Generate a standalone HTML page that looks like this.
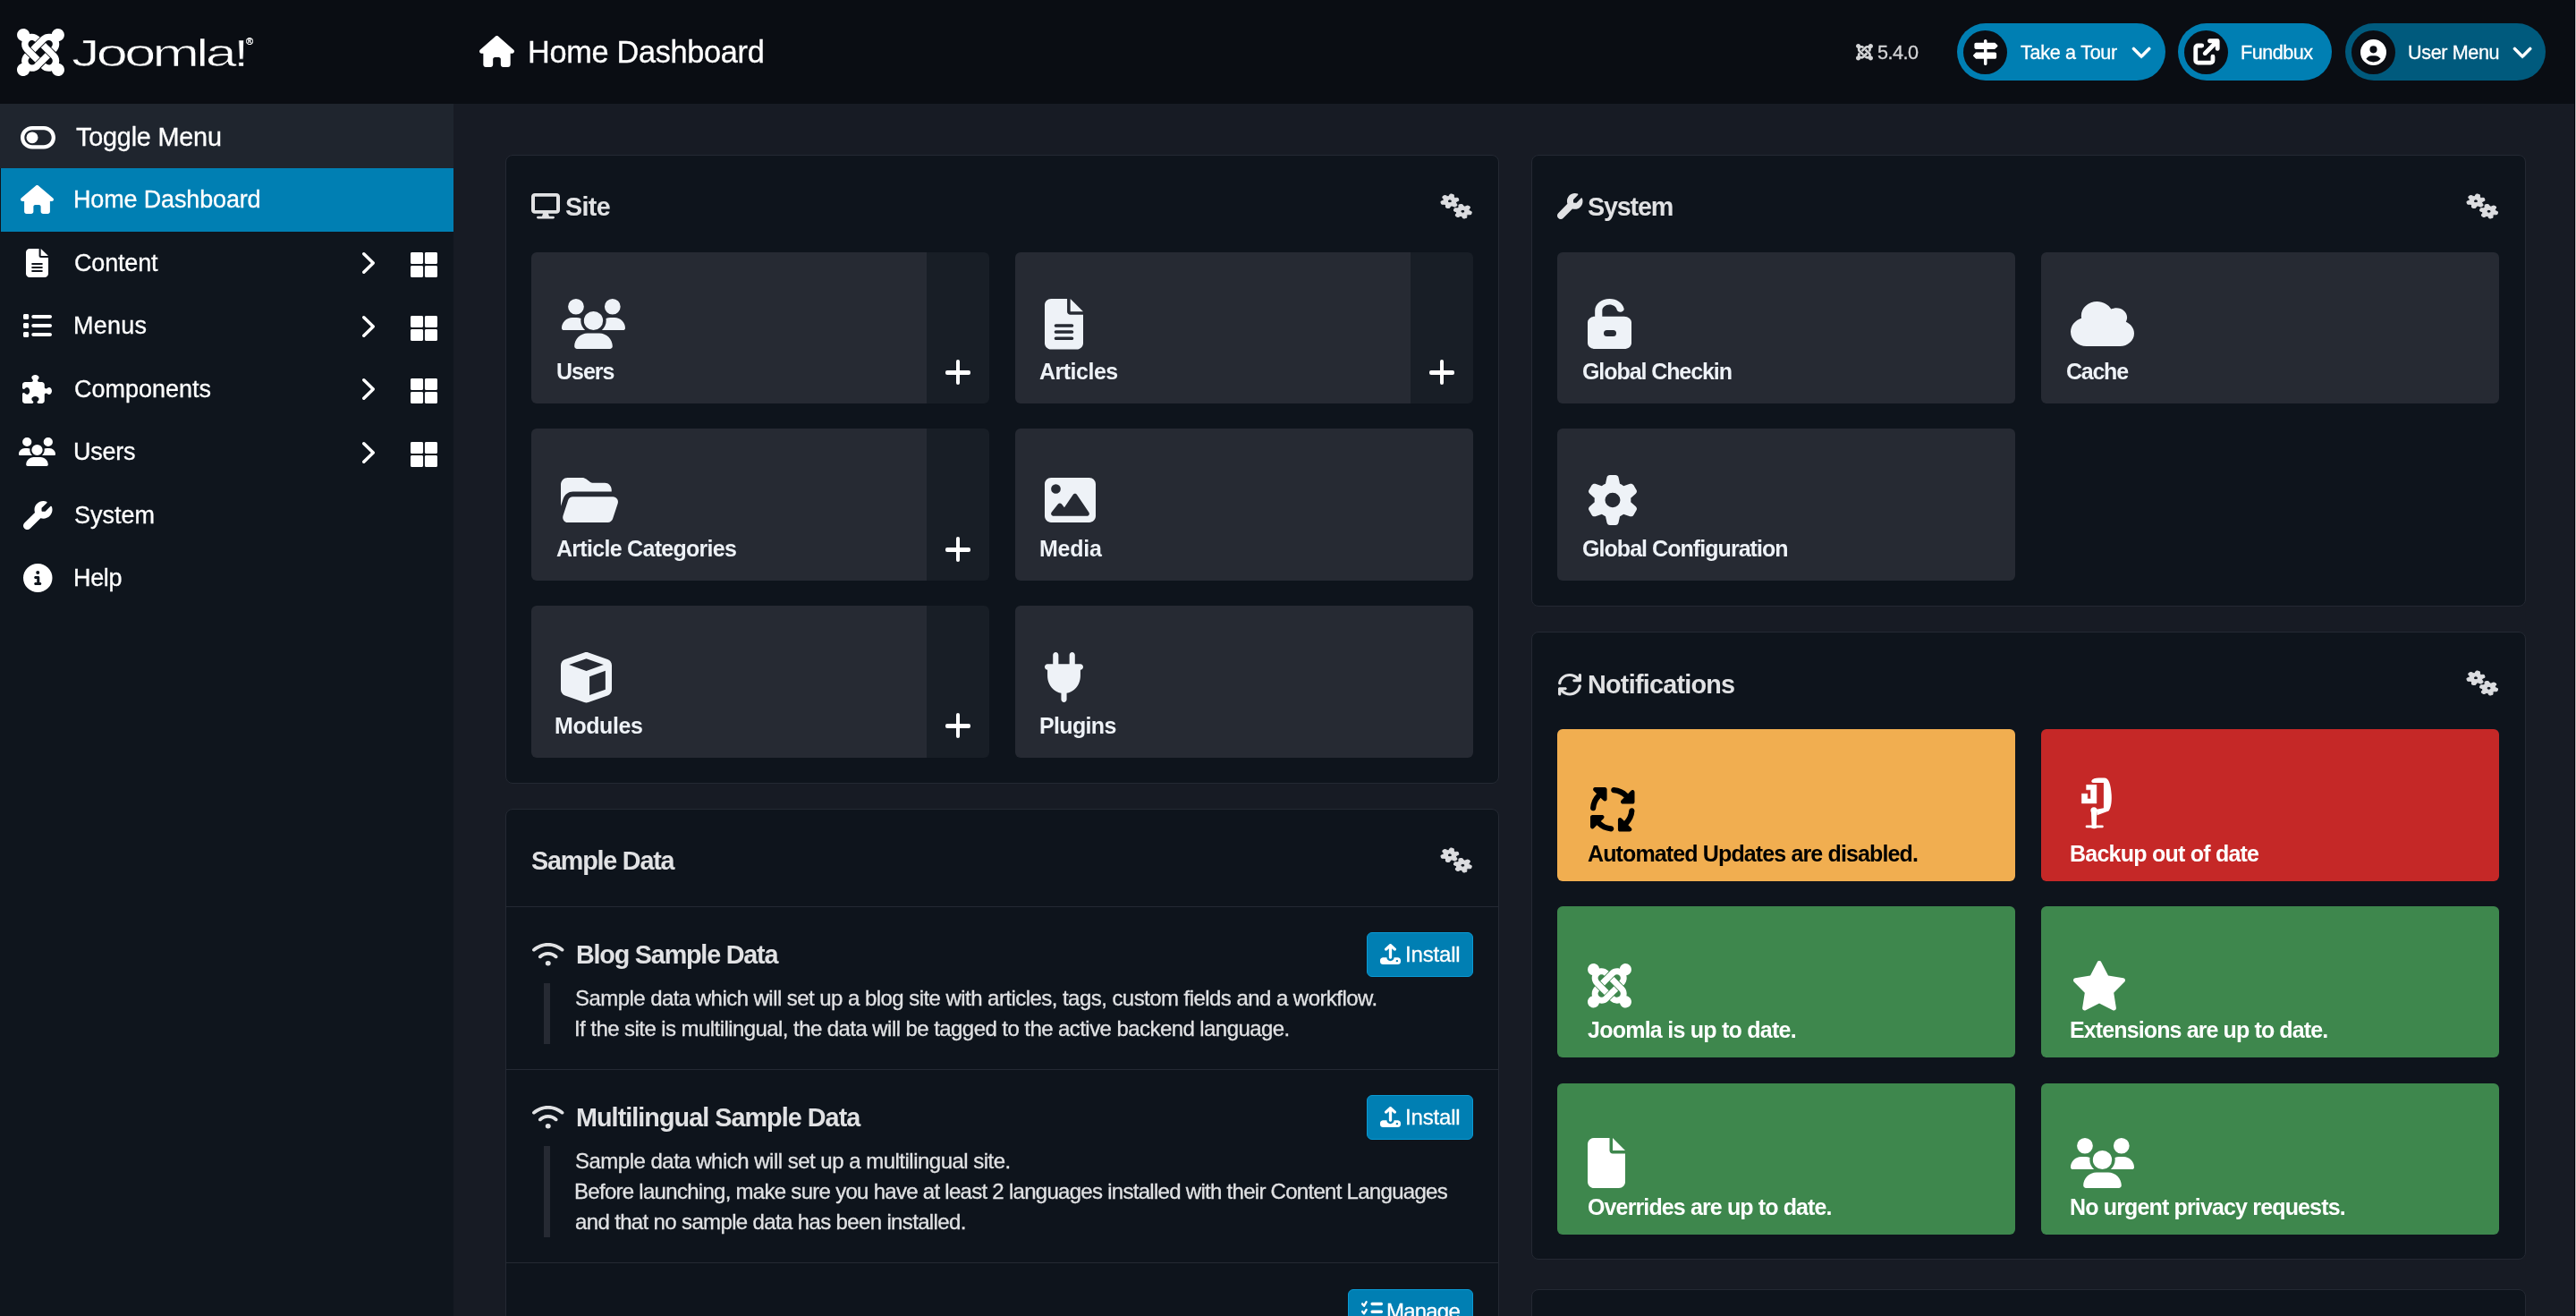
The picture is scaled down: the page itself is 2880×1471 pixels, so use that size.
<!DOCTYPE html>
<html lang="en"><head><meta charset="utf-8"><title>Home Dashboard - Administration</title>
<style>
html,body{margin:0;padding:0;overflow:hidden}
#app{position:relative;width:2880px;height:1471px;overflow:hidden;background:#171b24}
body{width:2880px;height:1471px;overflow:hidden;position:relative;background:#171b24;font-family:"Liberation Sans",Arial,sans-serif;color:#e1e2e4}
.t{position:absolute;white-space:nowrap;display:block;will-change:transform}
.i{position:absolute;display:block;overflow:visible}
h1,h2,h3,p,ul,li,nav,header,main,section,a,button{margin:0;padding:0;font:inherit;color:inherit;list-style:none;text-decoration:none;border:0;background:none}
</style></head><body>
<div id="app">
<header style="position:absolute;left:0px;top:0px;width:2880px;height:116px;background:#0a0d13;"><svg class="i" style="left:19.0px;top:32.0px;" width="53.0" height="53.0" viewBox="-0.0 31.9 448.0 448.1" fill="#fff" preserveAspectRatio="none"><path d="M.6 92.1C.6 58.8 27.4 32 60.4 32c30 0 54.5 21.9 59.2 50.2 32.6-7.6 67.1.6 96.5 30l-44.3 44.3c-20.5-20.5-42.6-16.3-55.4-3.5-14.3 14.3-14.3 37.9 0 52.2l99.5 99.5-44 44.3c-87.7-87.2-49.7-49.7-99.8-99.7-26.8-26.5-35-64.8-24.8-98.9C20.4 144.6.6 120.7.6 92.1m129.5 116.4 44.3 44.3c10-10 89.7-89.7 99.7-99.8 14.3-14.3 37.6-14.3 51.9 0 12.8 12.8 17 35-3.5 55.4l44 44.3c31.2-31.2 38.5-67.6 28.9-101.2 29.2-4.1 51.9-29.2 51.9-59.5 0-33.2-26.8-60.1-59.8-60.1-30.3 0-55.4 22.5-59.5 51.6-33.8-9.9-71.7-1.5-98.3 25.1-18.3 19.1-71.1 71.5-99.6 99.9m266.3 152.2c8.2-32.7-.9-68.5-26.3-93.9-11.8-12.2 5 4.7-99.5-99.7l-44.3 44.3 99.7 99.7c14.3 14.3 14.3 37.6 0 51.9-12.8 12.8-35 17-55.4-3.5l-44 44.3c27.6 30.2 68 38.8 102.7 28 5.5 27.4 29.7 48.1 58.9 48.1 33 0 59.8-26.8 59.8-60.1 0-30.2-22.5-55-51.6-59.1m-84.3-53.1-44-44.3c-87 86.4-50.4 50.4-99.7 99.8-14.3 14.3-37.6 14.3-51.9 0-13.1-13.4-16.9-35.3 3.2-55.4l-44-44.3c-30.2 30.2-38 65.2-29.5 98.3-26.7 6-46.2 29.9-46.2 58.2C0 453.2 26.8 480 59.8 480c28.6 0 52.5-19.8 58.6-46.7 32.7 8.2 68.5-.6 94.2-26 32.1-32 12.2-12.4 99.5-99.7"/></svg><span id="t1" class="t wm" style="left:80px;top:32px;font-size:42px;line-height:55px;color:#fff;transform:scaleX(1.5);transform-origin:0 0;letter-spacing:-2.45px;-webkit-text-stroke:0.65px #0a0d13;">Joomla!</span><span id="t2" class="t " style="left:275px;top:39px;font-size:11px;line-height:14px;-webkit-text-stroke:0.3px;color:#fff;">®</span><svg class="i" style="left:536.0px;top:39.5px;" width="39.0" height="35.0" viewBox="0.0 0.0 576.0 512.0" fill="#fff" preserveAspectRatio="none"><path d="M575.8 255.5c0 18-15 32.1-32 32.1h-32l.7 160.2c0 2.700-.2 5.400-.5 8.100V472c0 22.100-17.900 40-40 40H456c-1.100 0-2.200 0-3.300-.1c-1.400 .1-2.800 .1-4.200 .1H416 392c-22.100 0-40-17.900-40-40V448 384c0-17.700-14.300-32-32-32H256c-17.700 0-32 14.300-32 32v64 24c0 22.100-17.900 40-40 40H160 128.100c-1.500 0-3-.1-4.500-.2c-1.200 .1-2.400 .2-3.600 .2H104c-22.100 0-40-17.900-40-40V360c0-.9 0-1.900 .1-2.800V287.600H32c-18 0-32-14-32-32.100c0-9 3-17 10-24L266.400 8c7-7 15-8 22-8s15 2 21 7L564.800 231.500c8 7 12 15 11 24z"/></svg><h1><span id="t3" class="t " style="left:590px;top:35px;font-size:34.3px;line-height:46px;-webkit-text-stroke:0.3px;color:#fff;letter-spacing:-0.308px;">Home Dashboard</span></h1><svg class="i" style="left:2074.5px;top:49.0px;" width="19.0" height="18.5" viewBox="-0.0 31.9 448.0 448.1" fill="#d4d5d7" preserveAspectRatio="none"><path d="M.6 92.1C.6 58.8 27.4 32 60.4 32c30 0 54.5 21.9 59.2 50.2 32.6-7.6 67.1.6 96.5 30l-44.3 44.3c-20.5-20.5-42.6-16.3-55.4-3.5-14.3 14.3-14.3 37.9 0 52.2l99.5 99.5-44 44.3c-87.7-87.2-49.7-49.7-99.8-99.7-26.8-26.5-35-64.8-24.8-98.9C20.4 144.6.6 120.7.6 92.1m129.5 116.4 44.3 44.3c10-10 89.7-89.7 99.7-99.8 14.3-14.3 37.6-14.3 51.9 0 12.8 12.8 17 35-3.5 55.4l44 44.3c31.2-31.2 38.5-67.6 28.9-101.2 29.2-4.1 51.9-29.2 51.9-59.5 0-33.2-26.8-60.1-59.8-60.1-30.3 0-55.4 22.5-59.5 51.6-33.8-9.9-71.7-1.5-98.3 25.1-18.3 19.1-71.1 71.5-99.6 99.9m266.3 152.2c8.2-32.7-.9-68.5-26.3-93.9-11.8-12.2 5 4.7-99.5-99.7l-44.3 44.3 99.7 99.7c14.3 14.3 14.3 37.6 0 51.9-12.8 12.8-35 17-55.4-3.5l-44 44.3c27.6 30.2 68 38.8 102.7 28 5.5 27.4 29.7 48.1 58.9 48.1 33 0 59.8-26.8 59.8-60.1 0-30.2-22.5-55-51.6-59.1m-84.3-53.1-44-44.3c-87 86.4-50.4 50.4-99.7 99.8-14.3 14.3-37.6 14.3-51.9 0-13.1-13.4-16.9-35.3 3.2-55.4l-44-44.3c-30.2 30.2-38 65.2-29.5 98.3-26.7 6-46.2 29.9-46.2 58.2C0 453.2 26.8 480 59.8 480c28.6 0 52.5-19.8 58.6-46.7 32.7 8.2 68.5-.6 94.2-26 32.1-32 12.2-12.4 99.5-99.7"/></svg><span id="t4" class="t " style="left:2099px;top:44px;font-size:21.6px;line-height:29px;-webkit-text-stroke:0.3px;color:#d4d5d7;letter-spacing:-0.500px;">5.4.0</span><div style="position:absolute;left:2188px;top:26px;width:233px;height:64px;background:#007fb3;border-radius:32px;"></div><div style="position:absolute;left:2195px;top:34px;width:49px;height:49px;background:#0a0d13;border-radius:50%;"></div><svg class="i" style="left:2206.0px;top:44.0px;" width="27.5" height="29.0" viewBox="7.1 0.0 498.7 512.0" fill="#fff" preserveAspectRatio="none"><path d="M256.4 0c-17.7 0-32 14.3-32 32v32h-160c-17.7 0-32 14.3-32 32v64c0 17.7 14.3 32 32 32h160v64H71c-4.2 0-8.3 1.7-11.3 4.7l-48 48c-6.2 6.2-6.2 16.4 0 22.6l48 48c3 3 7.1 4.7 11.3 4.7h153.4v96c0 17.7 14.3 32 32 32s32-14.3 32-32v-96h160c17.7 0 32-14.3 32-32v-64c0-17.7-14.3-32-32-32h-160v-64h153.4c4.2 0 8.3-1.7 11.3-4.7l48-48c6.2-6.2 6.2-16.4 0-22.6l-48-48c-3-3-7.1-4.7-11.3-4.7H288.4V32c0-17.7-14.3-32-32-32"/></svg><span id="t5" class="t " style="left:2259px;top:44px;font-size:21.6px;line-height:29px;-webkit-text-stroke:0.3px;color:#fff;letter-spacing:-0.300px;">Take a Tour</span><svg class="i" style="left:2384.4px;top:53.4px;" width="20.199999999999818" height="11.79999999999999" viewBox="-0.1 159.9 448.2 256.1" fill="#fff" stroke="#fff" stroke-width="17.6" stroke-linejoin="round" preserveAspectRatio="none"><path d="M201.4 406.6c12.5 12.5 32.8 12.5 45.3 0l192-192c12.5-12.5 12.5-32.8 0-45.3s-32.8-12.5-45.3 0L224 338.7 54.6 169.4c-12.5-12.5-32.8-12.5-45.3 0s-12.5 32.8 0 45.3l192 192z"/></svg><div style="position:absolute;left:2435px;top:26px;width:172px;height:64px;background:#007fb3;border-radius:32px;"></div><div style="position:absolute;left:2442px;top:34px;width:49px;height:49px;background:#0a0d13;border-radius:50%;"></div><svg class="i" style="left:2452.65px;top:44.4px;" width="27.949999999999818" height="27.949999999999996" viewBox="0.0 0.0 512.0 512.0" fill="#fff" stroke="#fff" stroke-width="23.8" stroke-linejoin="round" preserveAspectRatio="none"><path d="M320 0c-17.7 0-32 14.3-32 32s14.3 32 32 32h82.7L201.3 265.4c-12.5 12.5-12.5 32.8 0 45.3s32.8 12.5 45.3 0L448 109.3V192c0 17.7 14.3 32 32 32s32-14.3 32-32V32c0-17.7-14.3-32-32-32zM80 96c-44.2 0-80 35.8-80 80v256c0 44.2 35.8 80 80 80h256c44.2 0 80-35.8 80-80v-80c0-17.7-14.3-32-32-32s-32 14.3-32 32v80c0 8.8-7.2 16-16 16H80c-8.8 0-16-7.2-16-16V176c0-8.8 7.2-16 16-16h80c17.7 0 32-14.3 32-32s-14.3-32-32-32z"/></svg><span id="t6" class="t " style="left:2505px;top:44px;font-size:21.6px;line-height:29px;-webkit-text-stroke:0.3px;color:#fff;letter-spacing:-0.500px;">Fundbux</span><div style="position:absolute;left:2622px;top:26px;width:224px;height:64px;background:#005a7d;border-radius:32px;"></div><div style="position:absolute;left:2629px;top:34px;width:49px;height:49px;background:#0a0d13;border-radius:50%;"></div><svg class="i" style="left:2639.0px;top:44.0px;" width="29.0" height="29.0" viewBox="0.0 0.0 512.0 512.0" fill="#fff" preserveAspectRatio="none"><path d="M399 384.2c-22.1-38.4-63.6-64.2-111-64.2h-64c-47.4 0-88.9 25.8-111 64.2 35.2 39.2 86.2 63.8 143 63.8s107.8-24.7 143-63.8M0 256a256 256 0 1 1 512 0 256 256 0 1 1-512 0m256 16a72 72 0 1 0 0-144 72 72 0 1 0 0 144"/></svg><span id="t7" class="t " style="left:2692px;top:44px;font-size:21.6px;line-height:29px;-webkit-text-stroke:0.3px;color:#fff;letter-spacing:-0.375px;">User Menu</span><svg class="i" style="left:2809.9px;top:53.4px;" width="20.199999999999818" height="11.79999999999999" viewBox="-0.1 159.9 448.2 256.1" fill="#fff" stroke="#fff" stroke-width="17.6" stroke-linejoin="round" preserveAspectRatio="none"><path d="M201.4 406.6c12.5 12.5 32.8 12.5 45.3 0l192-192c12.5-12.5 12.5-32.8 0-45.3s-32.8-12.5-45.3 0L224 338.7 54.6 169.4c-12.5-12.5-32.8-12.5-45.3 0s-12.5 32.8 0 45.3l192 192z"/></svg></header>
<nav style="position:absolute;left:0px;top:116px;width:507px;height:1355px;background:#0f151d;"><div style="position:absolute;left:0px;top:0px;width:507px;height:72px;background:#1f252e;"></div><div style="position:absolute;left:1px;top:72px;width:506px;height:71px;background:#007fb3;"></div><ul><li><svg class="i" style="left:23.0px;top:24.5px;" width="39.0" height="25.5" viewBox="0.0 64.0 576.0 384.0" fill="#fff" preserveAspectRatio="none"><path d="M384 128c70.700 0 128 57.300 128 128s-57.300 128-128 128H192c-70.700 0-128-57.300-128-128s57.300-128 128-128H384zM576 256c0-106-86-192-192-192H192C86 64 0 150 0 256S86 448 192 448H384c106 0 192-86 192-192zM192 352a96 96 0 1 0 0-192 96 96 0 1 0 0 192z"/></svg><span id="t8" class="t " style="left:85px;top:18px;font-size:28.8px;line-height:38px;-webkit-text-stroke:0.3px;color:#fff;letter-spacing:-0.200px;">Toggle Menu</span></li><li><svg class="i" style="left:23.0px;top:91.0px;" width="37.0" height="32.0" viewBox="0.0 0.0 576.0 512.0" fill="#fff" preserveAspectRatio="none"><path d="M575.8 255.5c0 18-15 32.1-32 32.1h-32l.7 160.2c0 2.700-.2 5.400-.5 8.100V472c0 22.100-17.900 40-40 40H456c-1.100 0-2.200 0-3.300-.1c-1.400 .1-2.800 .1-4.200 .1H416 392c-22.100 0-40-17.900-40-40V448 384c0-17.700-14.300-32-32-32H256c-17.700 0-32 14.300-32 32v64 24c0 22.100-17.900 40-40 40H160 128.100c-1.500 0-3-.1-4.500-.2c-1.200 .1-2.400 .2-3.600 .2H104c-22.100 0-40-17.900-40-40V360c0-.9 0-1.900 .1-2.800V287.600H32c-18 0-32-14-32-32.100c0-9 3-17 10-24L266.400 8c7-7 15-8 22-8s15 2 21 7L564.800 231.500c8 7 12 15 11 24z"/></svg><span id="t9" class="t " style="left:82px;top:89px;font-size:27.0px;line-height:36px;-webkit-text-stroke:0.3px;color:#fff;letter-spacing:-0.154px;">Home Dashboard</span></li><li><svg class="i" style="left:29.0px;top:162.0px;" width="25.0" height="32.0" viewBox="0.0 0.0 384.0 512.0" fill="#fff" preserveAspectRatio="none"><path d="M64 0C28.700 0 0 28.700 0 64V448c0 35.300 28.700 64 64 64H320c35.300 0 64-28.700 64-64V160H256c-17.700 0-32-14.300-32-32V0H64zM256 0V128H384L256 0zM112 256H272c8.800 0 16 7.200 16 16s-7.200 16-16 16H112c-8.800 0-16-7.200-16-16s7.200-16 16-16zm0 64H272c8.800 0 16 7.200 16 16s-7.200 16-16 16H112c-8.800 0-16-7.200-16-16s7.200-16 16-16zm0 64H272c8.800 0 16 7.200 16 16s-7.200 16-16 16H112c-8.800 0-16-7.200-16-16s7.200-16 16-16z"/></svg><span id="t10" class="t " style="left:83px;top:160px;font-size:27.0px;line-height:36px;-webkit-text-stroke:0.3px;color:#fff;letter-spacing:-0.167px;">Content</span><svg class="i" style="left:405.0px;top:166.0px;" width="14.0" height="24.0" viewBox="64.4 31.9 256.1 448.1" fill="#fff" preserveAspectRatio="none"><path d="M311.1 233.4c12.5 12.5 12.5 32.8 0 45.3l-192 192c-12.5 12.5-32.8 12.5-45.3 0s-12.5-32.8 0-45.3L243.2 256 73.9 86.6c-12.5-12.5-12.5-32.8 0-45.3s32.8-12.5 45.3 0l192 192z"/></svg><svg class="i" style="left:459.0px;top:166.0px;" width="30.0" height="28.0" viewBox="0.0 32.0 512.0 448.0" fill="#fff" preserveAspectRatio="none"><path d="M296 32h192c13.255 0 24 10.745 24 24v160c0 13.255-10.745 24-24 24H296c-13.255 0-24-10.745-24-24V56c0-13.255 10.745-24 24-24zm-80 0H24C10.745 32 0 42.745 0 56v160c0 13.255 10.745 24 24 24h192c13.255 0 24-10.745 24-24V56c0-13.255-10.745-24-24-24zM0 296v160c0 13.255 10.745 24 24 24h192c13.255 0 24-10.745 24-24V296c0-13.255-10.745-24-24-24H24c-13.255 0-24 10.745-24 24zm296 184h192c13.255 0 24-10.745 24-24V296c0-13.255-10.745-24-24-24H296c-13.255 0-24 10.745-24 24v160c0 13.255 10.745 24 24 24z"/></svg></li><li><svg class="i" style="left:26.0px;top:235.0px;" width="32.0" height="26.0" viewBox="16.0 48.0 496.0 416.0" fill="#fff" preserveAspectRatio="none"><path d="M40 48c-13.3 0-24 10.7-24 24v48c0 13.3 10.7 24 24 24h48c13.3 0 24-10.7 24-24V72c0-13.3-10.7-24-24-24zm152 16c-17.7 0-32 14.3-32 32s14.3 32 32 32h288c17.7 0 32-14.3 32-32s-14.3-32-32-32zm0 160c-17.7 0-32 14.3-32 32s14.3 32 32 32h288c17.7 0 32-14.3 32-32s-14.3-32-32-32zm0 160c-17.7 0-32 14.3-32 32s14.3 32 32 32h288c17.7 0 32-14.3 32-32s-14.3-32-32-32zM16 232v48c0 13.3 10.7 24 24 24h48c13.3 0 24-10.7 24-24v-48c0-13.3-10.7-24-24-24H40c-13.3 0-24 10.7-24 24m24 136c-13.3 0-24 10.7-24 24v48c0 13.3 10.7 24 24 24h48c13.3 0 24-10.7 24-24v-48c0-13.3-10.7-24-24-24z"/></svg><span id="t11" class="t " style="left:82px;top:230px;font-size:27.0px;line-height:36px;-webkit-text-stroke:0.3px;color:#fff;letter-spacing:0.250px;">Menus</span><svg class="i" style="left:405.0px;top:236.5px;" width="14.0" height="24.0" viewBox="64.4 31.9 256.1 448.1" fill="#fff" preserveAspectRatio="none"><path d="M311.1 233.4c12.5 12.5 12.5 32.8 0 45.3l-192 192c-12.5 12.5-32.8 12.5-45.3 0s-12.5-32.8 0-45.3L243.2 256 73.9 86.6c-12.5-12.5-12.5-32.8 0-45.3s32.8-12.5 45.3 0l192 192z"/></svg><svg class="i" style="left:459.0px;top:236.5px;" width="30.0" height="28.0" viewBox="0.0 32.0 512.0 448.0" fill="#fff" preserveAspectRatio="none"><path d="M296 32h192c13.255 0 24 10.745 24 24v160c0 13.255-10.745 24-24 24H296c-13.255 0-24-10.745-24-24V56c0-13.255 10.745-24 24-24zm-80 0H24C10.745 32 0 42.745 0 56v160c0 13.255 10.745 24 24 24h192c13.255 0 24-10.745 24-24V56c0-13.255-10.745-24-24-24zM0 296v160c0 13.255 10.745 24 24 24h192c13.255 0 24-10.745 24-24V296c0-13.255-10.745-24-24-24H24c-13.255 0-24 10.745-24 24zm296 184h192c13.255 0 24-10.745 24-24V296c0-13.255-10.745-24-24-24H296c-13.255 0-24 10.745-24 24v160c0 13.255 10.745 24 24 24z"/></svg></li><li><svg class="i" style="left:25.0px;top:303.0px;" width="33.0" height="32.0" viewBox="0.0 0.0 512.0 512.0" fill="#fff" preserveAspectRatio="none"><path d="M224 0c35.3 0 64 21.5 64 48 0 10.4-4.4 20-12 27.9-6.6 6.9-12 15.3-12 24.9 0 15 12.2 27.2 27.2 27.2H336c26.5 0 48 21.5 48 48v44.8c0 15 12.2 27.2 27.2 27.2 9.5 0 18-5.4 24.9-12 7.9-7.5 17.5-12 27.9-12 26.5 0 48 28.7 48 64s-21.5 64-48 64c-10.4 0-20.1-4.4-27.9-12-6.9-6.6-15.3-12-24.9-12-15 0-27.2 12.2-27.2 27.2V464c0 26.5-21.5 48-48 48h-56.8c-12.8 0-23.2-10.4-23.2-23.2 0-9.2 5.8-17.3 13.2-22.8 11.6-8.7 18.8-20.7 18.8-34 0-26.5-28.7-48-64-48s-64 21.5-64 48c0 13.3 7.2 25.3 18.8 34 7.4 5.5 13.2 13.5 13.2 22.8 0 12.8-10.4 23.2-23.2 23.2H48c-26.5 0-48-21.5-48-48V343.2C0 330.4 10.4 320 23.2 320c9.2 0 17.3 5.8 22.8 13.2 8.7 11.6 20.7 18.8 34 18.8 26.5 0 48-28.7 48-64s-21.5-64-48-64c-13.3 0-25.3 7.2-34 18.8-5.5 7.4-13.5 13.2-22.8 13.2C10.4 256 0 245.6 0 232.8V176c0-26.5 21.5-48 48-48h108.8c15 0 27.2-12.2 27.2-27.2 0-9.5-5.4-18-12-24.9-7.5-7.9-12-17.5-12-27.9 0-26.5 28.7-48 64-48"/></svg><span id="t12" class="t " style="left:83px;top:301px;font-size:27.0px;line-height:36px;-webkit-text-stroke:0.3px;color:#fff;letter-spacing:0.000px;">Components</span><svg class="i" style="left:405.0px;top:307.0px;" width="14.0" height="24.0" viewBox="64.4 31.9 256.1 448.1" fill="#fff" preserveAspectRatio="none"><path d="M311.1 233.4c12.5 12.5 12.5 32.8 0 45.3l-192 192c-12.5 12.5-32.8 12.5-45.3 0s-12.5-32.8 0-45.3L243.2 256 73.9 86.6c-12.5-12.5-12.5-32.8 0-45.3s32.8-12.5 45.3 0l192 192z"/></svg><svg class="i" style="left:459.0px;top:307.0px;" width="30.0" height="28.0" viewBox="0.0 32.0 512.0 448.0" fill="#fff" preserveAspectRatio="none"><path d="M296 32h192c13.255 0 24 10.745 24 24v160c0 13.255-10.745 24-24 24H296c-13.255 0-24-10.745-24-24V56c0-13.255 10.745-24 24-24zm-80 0H24C10.745 32 0 42.745 0 56v160c0 13.255 10.745 24 24 24h192c13.255 0 24-10.745 24-24V56c0-13.255-10.745-24-24-24zM0 296v160c0 13.255 10.745 24 24 24h192c13.255 0 24-10.745 24-24V296c0-13.255-10.745-24-24-24H24c-13.255 0-24 10.745-24 24zm296 184h192c13.255 0 24-10.745 24-24V296c0-13.255-10.745-24-24-24H296c-13.255 0-24 10.745-24 24v160c0 13.255 10.745 24 24 24z"/></svg></li><li><svg class="i" style="left:21.0px;top:373.0px;" width="41.0" height="32.0" viewBox="0.0 0.0 640.0 512.0" fill="#fff" preserveAspectRatio="none"><path d="M144 0a80 80 0 1 1 0 160A80 80 0 1 1 144 0zM512 0a80 80 0 1 1 0 160A80 80 0 1 1 512 0zM0 298.700C0 239.800 47.800 192 106.700 192h42.700c15.900 0 31 3.500 44.600 9.700c-1.300 7.200-1.900 14.700-1.900 22.300c0 38.200 16.800 72.500 43.300 96c-.2 0-.4 0-.7 0H21.300C9.600 320 0 310.400 0 298.700zM405.300 320c-.2 0-.4 0-.7 0c26.600-23.500 43.300-57.800 43.300-96c0-7.600-.7-15-1.900-22.300c13.600-6.300 28.700-9.700 44.600-9.700h42.700C592.200 192 640 239.800 640 298.700c0 11.800-9.600 21.300-21.300 21.300H405.300zM224 224a96 96 0 1 1 192 0 96 96 0 1 1 -192 0zM128 485.300C128 411.700 187.700 352 261.300 352H378.700C452.300 352 512 411.700 512 485.300c0 14.700-11.900 26.700-26.700 26.700H154.700c-14.700 0-26.700-11.900-26.700-26.700z"/></svg><span id="t13" class="t " style="left:82px;top:371px;font-size:27.0px;line-height:36px;-webkit-text-stroke:0.3px;color:#fff;letter-spacing:-0.250px;">Users</span><svg class="i" style="left:405.0px;top:377.5px;" width="14.0" height="24.0" viewBox="64.4 31.9 256.1 448.1" fill="#fff" preserveAspectRatio="none"><path d="M311.1 233.4c12.5 12.5 12.5 32.8 0 45.3l-192 192c-12.5 12.5-32.8 12.5-45.3 0s-12.5-32.8 0-45.3L243.2 256 73.9 86.6c-12.5-12.5-12.5-32.8 0-45.3s32.8-12.5 45.3 0l192 192z"/></svg><svg class="i" style="left:459.0px;top:377.5px;" width="30.0" height="28.0" viewBox="0.0 32.0 512.0 448.0" fill="#fff" preserveAspectRatio="none"><path d="M296 32h192c13.255 0 24 10.745 24 24v160c0 13.255-10.745 24-24 24H296c-13.255 0-24-10.745-24-24V56c0-13.255 10.745-24 24-24zm-80 0H24C10.745 32 0 42.745 0 56v160c0 13.255 10.745 24 24 24h192c13.255 0 24-10.745 24-24V56c0-13.255-10.745-24-24-24zM0 296v160c0 13.255 10.745 24 24 24h192c13.255 0 24-10.745 24-24V296c0-13.255-10.745-24-24-24H24c-13.255 0-24 10.745-24 24zm296 184h192c13.255 0 24-10.745 24-24V296c0-13.255-10.745-24-24-24H296c-13.255 0-24 10.745-24 24v160c0 13.255 10.745 24 24 24z"/></svg></li><li><svg class="i" style="left:25.5px;top:444.0px;" width="32.5" height="32.0" viewBox="24.0 0.0 520.0 520.0" fill="#fff" preserveAspectRatio="none"><path d="M509.4 98.6c7.6-7.6 20.3-5.7 24.1 4.3 6.8 17.7 10.5 37 10.5 57.1 0 88.4-71.6 160-160 160-17.5 0-34.4-2.8-50.2-8L146.9 498.9c-28.1 28.1-73.7 28.1-101.8 0s-28.1-73.7 0-101.8L232 210.2c-5.2-15.8-8-32.6-8-50.2C224 71.6 295.6 0 384 0c20.1 0 39.4 3.7 57.1 10.5 10 3.8 11.8 16.5 4.3 24.1l-88.7 88.7c-3 3-4.7 7.1-4.7 11.3V176c0 8.8 7.2 16 16 16h41.4c4.2 0 8.3-1.7 11.3-4.7z"/></svg><span id="t14" class="t " style="left:83px;top:442px;font-size:27.0px;line-height:36px;-webkit-text-stroke:0.3px;color:#fff;letter-spacing:0.000px;">System</span></li><li><svg class="i" style="left:25.5px;top:514.0px;" width="32.5" height="32.0" viewBox="0.0 0.0 512.0 512.0" fill="#fff" preserveAspectRatio="none"><path d="M256 512a256 256 0 1 0 0-512 256 256 0 1 0 0 512m-32-352a32 32 0 1 1 64 0 32 32 0 1 1-64 0m-8 64h48c13.3 0 24 10.7 24 24v88h8c13.3 0 24 10.7 24 24s-10.7 24-24 24h-80c-13.3 0-24-10.7-24-24s10.7-24 24-24h24v-64h-24c-13.3 0-24-10.7-24-24s10.7-24 24-24"/></svg><span id="t15" class="t " style="left:82px;top:512px;font-size:27.0px;line-height:36px;-webkit-text-stroke:0.3px;color:#fff;letter-spacing:-0.333px;">Help</span></li></ul></nav>
<section style="position:absolute;left:565px;top:173px;width:1109px;height:701px;background:#0e141c;border:1px solid #242933;border-radius:8px;"><svg class="i" style="left:28.0px;top:42.0px;" width="32.0" height="28.5" viewBox="0.0 32.0 512.0 480.0" fill="#e1e2e4" preserveAspectRatio="none"><path d="M448 96v256H64V96zM64 32C28.7 32 0 60.7 0 96v256c0 35.3 28.7 64 64 64h144l-16 48h-72c-13.3 0-24 10.7-24 24s10.7 24 24 24h272c13.3 0 24-10.7 24-24s-10.7-24-24-24h-72l-16-48h144c35.3 0 64-28.7 64-64V96c0-35.3-28.7-64-64-64z"/></svg><h2><span id="t16" class="t " style="left:66px;top:38px;font-size:28.75px;line-height:38px;font-weight:700;color:#e1e2e4;letter-spacing:-0.667px;">Site</span></h2><svg class="i" style="left:1045.25px;top:43.25px;" width="34.25" height="27.0" viewBox="18.0 -46.4 604.8 604.8" fill="#dcdde0" stroke="#dcdde0" stroke-width="19.7" stroke-linejoin="round" preserveAspectRatio="none"><path d="M415.9 210.5c12.2-3.3 25 2.5 30.5 13.8l18.6 37.6c10.3 1.4 20.4 4.2 29.9 8.1l35-23.3c10.5-7 24.4-5.6 33.3 3.3l19.2 19.2c8.9 8.9 10.3 22.9 3.3 33.3l-23.3 34.9c1.9 4.7 3.6 9.6 5 14.7s2.3 10.1 3 15.2l37.7 18.6c11.3 5.6 17.1 18.4 13.8 30.5l-7 26.2c-3.3 12.1-14.6 20.3-27.2 19.5l-42-2.7c-6.3 8.1-13.6 15.6-21.9 22l2.7 41.9c.8 12.6-7.4 24-19.5 27.2l-26.2 7c-12.2 3.3-24.9-2.5-30.5-13.8l-18.6-37.6c-10.3-1.4-20.4-4.2-29.9-8.1l-35 23.3c-10.5 7-24.4 5.6-33.3-3.3l-19.2-19.2c-8.9-8.9-10.3-22.8-3.3-33.3l23.3-35c-1.9-4.7-3.6-9.6-5-14.7s-2.3-10.2-3-15.2L288.6 382c-11.3-5.6-17-18.4-13.8-30.5l7-26.2c3.3-12.1 14.6-20.3 27.2-19.5l41.9 2.7c6.3-8.1 13.6-15.6 21.9-22l-2.7-41.8c-.8-12.6 7.4-24 19.5-27.2l26.2-7zM448.4 340a44 44 0 1 0 .1 88 44 44 0 1 0-.1-88M224.9-45.5l26.2 7c12.1 3.3 20.3 14.7 19.5 27.2l-2.7 41.8c8.3 6.4 15.6 13.8 21.9 22l42-2.7c12.5-.8 23.9 7.4 27.2 19.5l7 26.2c3.2 12.1-2.5 24.9-13.8 30.5l-37.7 18.6c-.7 5.1-1.7 10.2-3 15.2s-3.1 10-5 14.7l23.3 35c7 10.5 5.6 24.4-3.3 33.3L307.3 262c-8.9 8.9-22.8 10.3-33.3 3.3L239 242c-9.5 3.9-19.6 6.7-29.9 8.1l-18.6 37.6c-5.6 11.3-18.4 17-30.5 13.8l-26.2-7c-12.2-3.3-20.3-14.7-19.5-27.2l2.7-41.9c-8.3-6.4-15.6-13.8-21.9-22l-42 2.7c-12.5.8-23.9-7.4-27.2-19.5l-7-26.2c-3.2-12.1 2.5-24.9 13.8-30.5l37.7-18.6c.7-5.1 1.7-10.1 3-15.2 1.4-5.1 3-10 5-14.7L55.1 46.5c-7-10.5-5.6-24.4 3.3-33.3L77.6-6c8.9-8.9 22.8-10.3 33.3-3.3l35 23.3c9.5-3.9 19.6-6.7 29.9-8.1l18.6-37.6c5.6-11.3 18.3-17 30.5-13.8M192.4 84a44 44 0 1 0 0 88 44 44 0 1 0 0-88"/></svg><div style="position:absolute;left:28px;top:108px;width:442px;height:169px;background:#262a33;border-radius:6px 0 0 6px;"></div><div style="position:absolute;left:470px;top:108px;width:70px;height:169px;background:#181e26;border-radius:0 6px 6px 0;"></div><div style="position:absolute;left:491px;top:240.0px;width:28px;height:4.5px;background:#fff;border-radius:2px;"></div><div style="position:absolute;left:502.75px;top:228.25px;width:4.5px;height:28px;background:#fff;border-radius:2px;"></div><svg class="i" style="left:61.5px;top:160.0px;" width="71.0" height="56.0" viewBox="0.0 0.0 640.0 512.0" fill="#eef2f7" preserveAspectRatio="none"><path d="M144 0a80 80 0 1 1 0 160A80 80 0 1 1 144 0zM512 0a80 80 0 1 1 0 160A80 80 0 1 1 512 0zM0 298.700C0 239.800 47.800 192 106.700 192h42.700c15.900 0 31 3.500 44.600 9.700c-1.300 7.200-1.900 14.700-1.900 22.300c0 38.200 16.800 72.500 43.300 96c-.2 0-.4 0-.7 0H21.300C9.600 320 0 310.400 0 298.700zM405.300 320c-.2 0-.4 0-.7 0c26.600-23.500 43.300-57.800 43.300-96c0-7.600-.7-15-1.900-22.300c13.600-6.300 28.700-9.700 44.600-9.700h42.700C592.200 192 640 239.800 640 298.700c0 11.800-9.600 21.300-21.300 21.300H405.300zM224 224a96 96 0 1 1 192 0 96 96 0 1 1 -192 0zM128 485.300C128 411.700 187.700 352 261.300 352H378.700C452.300 352 512 411.700 512 485.300c0 14.700-11.900 26.700-26.700 26.700H154.700c-14.700 0-26.700-11.900-26.700-26.700z"/></svg><span id="t17" class="t " style="left:56px;top:225px;font-size:25px;line-height:32px;font-weight:700;color:#eef2f7;letter-spacing:-1.000px;">Users</span><div style="position:absolute;left:569px;top:108px;width:442px;height:169px;background:#262a33;border-radius:6px 0 0 6px;"></div><div style="position:absolute;left:1011px;top:108px;width:70px;height:169px;background:#181e26;border-radius:0 6px 6px 0;"></div><div style="position:absolute;left:1032px;top:240.0px;width:28px;height:4.5px;background:#fff;border-radius:2px;"></div><div style="position:absolute;left:1043.75px;top:228.25px;width:4.5px;height:28px;background:#fff;border-radius:2px;"></div><svg class="i" style="left:602.0px;top:159.5px;" width="43.0" height="56.5" viewBox="0.0 0.0 384.0 512.0" fill="#eef2f7" preserveAspectRatio="none"><path d="M64 0C28.700 0 0 28.700 0 64V448c0 35.300 28.700 64 64 64H320c35.300 0 64-28.700 64-64V160H256c-17.700 0-32-14.300-32-32V0H64zM256 0V128H384L256 0zM112 256H272c8.800 0 16 7.200 16 16s-7.200 16-16 16H112c-8.800 0-16-7.200-16-16s7.200-16 16-16zm0 64H272c8.800 0 16 7.200 16 16s-7.200 16-16 16H112c-8.800 0-16-7.200-16-16s7.200-16 16-16zm0 64H272c8.800 0 16 7.200 16 16s-7.200 16-16 16H112c-8.800 0-16-7.200-16-16s7.200-16 16-16z"/></svg><span id="t18" class="t " style="left:596px;top:225px;font-size:25px;line-height:32px;font-weight:700;color:#eef2f7;letter-spacing:-0.500px;">Articles</span><div style="position:absolute;left:28px;top:305.4px;width:442px;height:169.6px;background:#262a33;border-radius:6px 0 0 6px;"></div><div style="position:absolute;left:470px;top:305.4px;width:70px;height:169.6px;background:#181e26;border-radius:0 6px 6px 0;"></div><div style="position:absolute;left:491px;top:438.0px;width:28px;height:4.5px;background:#fff;border-radius:2px;"></div><div style="position:absolute;left:502.75px;top:426.25px;width:4.5px;height:28px;background:#fff;border-radius:2px;"></div><svg class="i" style="left:61.0px;top:360.0px;" width="64.0" height="50.0" viewBox="32.4 32.0 541.4 416.0" fill="#eef2f7" preserveAspectRatio="none"><path d="m56 225.6-23.6 70.6V96c0-35.3 28.7-64 64-64h138.7c13.8 0 27.3 4.5 38.4 12.8l38.4 28.8c5.5 4.2 12.3 6.4 19.2 6.4h117.3c35.3 0 64 28.7 64 64v16H147c-41.3 0-78 26.4-91.1 65.6zM477.8 448H99c-32.8 0-55.9-32.1-45.5-63.2l48-144C108 221.2 126.4 208 147 208h378.8c32.8 0 55.9 32.1 45.5 63.2l-48 144c-6.5 19.6-24.9 32.8-45.5 32.8"/></svg><span id="t19" class="t " style="left:56px;top:423px;font-size:25px;line-height:32px;font-weight:700;color:#eef2f7;letter-spacing:-0.706px;">Article Categories</span><div style="position:absolute;left:569px;top:305.4px;width:512px;height:169.6px;background:#262a33;border-radius:6px;"></div><svg class="i" style="left:602.0px;top:360.0px;" width="57.0" height="50.0" viewBox="0.0 32.0 512.0 448.0" fill="#eef2f7" preserveAspectRatio="none"><path d="M0 96C0 60.700 28.700 32 64 32H448c35.300 0 64 28.700 64 64V416c0 35.300-28.700 64-64 64H64c-35.300 0-64-28.700-64-64V96zM323.800 202.500c-4.500-6.600-11.900-10.500-19.800-10.500s-15.400 3.900-19.800 10.500l-87 127.600L170.700 297c-4.600-5.700-11.500-9-18.700-9s-14.200 3.300-18.700 9l-64 80c-5.800 7.200-6.900 17.100-2.900 25.400s12.400 13.600 21.600 13.600h96 32H424c8.900 0 17.100-4.900 21.200-12.800s3.600-17.400-1.400-24.700l-120-176zM112 192a48 48 0 1 0 0-96 48 48 0 1 0 0 96z"/></svg><span id="t20" class="t " style="left:596px;top:423px;font-size:25px;line-height:32px;font-weight:700;color:#eef2f7;letter-spacing:-0.250px;">Media</span><div style="position:absolute;left:28px;top:502.79999999999995px;width:442px;height:169.8px;background:#262a33;border-radius:6px 0 0 6px;"></div><div style="position:absolute;left:470px;top:502.79999999999995px;width:70px;height:169.8px;background:#181e26;border-radius:0 6px 6px 0;"></div><div style="position:absolute;left:491px;top:635.0px;width:28px;height:4.5px;background:#fff;border-radius:2px;"></div><div style="position:absolute;left:502.75px;top:623.25px;width:4.5px;height:28px;background:#fff;border-radius:2px;"></div><svg class="i" style="left:61.0px;top:554.5px;" width="57.0" height="56.5" viewBox="0.0 1.9 512.0 508.1" fill="#eef2f7" preserveAspectRatio="none"><path d="M234.500 5.700c13.900-5 29.100-5 43.100 0l192 68.600C495 83.400 512 107.500 512 134.600V377.400c0 27-17 51.200-42.500 60.300l-192 68.600c-13.900 5-29.100 5-43.100 0l-192-68.600C17 428.600 0 404.500 0 377.400V134.600c0-27 17-51.200 42.500-60.300l192-68.600zM256 66L82.300 128 256 190l173.700-62L256 66zm32 368.600l160-57.100v-188L288 246.600v188z"/></svg><span id="t21" class="t " style="left:54px;top:621px;font-size:25px;line-height:32px;font-weight:700;color:#eef2f7;letter-spacing:-0.417px;">Modules</span><div style="position:absolute;left:569px;top:502.79999999999995px;width:512px;height:169.8px;background:#262a33;border-radius:6px;"></div><svg class="i" style="left:602.0px;top:555.0px;" width="43.0" height="56.0" viewBox="0.0 -32.0 448.0 544.0" fill="#eef2f7" preserveAspectRatio="none"><path d="M128-32c17.7 0 32 14.3 32 32v96h128V0c0-17.7 14.3-32 32-32s32 14.3 32 32v96h64c17.7 0 32 14.3 32 32s-14.3 32-32 32v64c0 95.1-69.2 174.1-160 189.3V480c0 17.7-14.3 32-32 32s-32-14.3-32-32v-66.7C101.2 398.1 32 319.1 32 224v-64c-17.7 0-32-14.3-32-32s14.3-32 32-32h64V0c0-17.7 14.3-32 32-32"/></svg><span id="t22" class="t " style="left:596px;top:621px;font-size:25px;line-height:32px;font-weight:700;color:#eef2f7;letter-spacing:-0.667px;">Plugins</span></section>
<section style="position:absolute;left:1712px;top:173px;width:1110px;height:503px;background:#0e141c;border:1px solid #242933;border-radius:8px;"><svg class="i" style="left:28.0px;top:42.0px;" width="28.5" height="29.0" viewBox="24.0 0.0 520.0 520.0" fill="#e1e2e4" preserveAspectRatio="none"><path d="M509.4 98.6c7.6-7.6 20.3-5.7 24.1 4.3 6.8 17.7 10.5 37 10.5 57.1 0 88.4-71.6 160-160 160-17.5 0-34.4-2.8-50.2-8L146.9 498.9c-28.1 28.1-73.7 28.1-101.8 0s-28.1-73.7 0-101.8L232 210.2c-5.2-15.8-8-32.6-8-50.2C224 71.6 295.6 0 384 0c20.1 0 39.4 3.7 57.1 10.5 10 3.8 11.8 16.5 4.3 24.1l-88.7 88.7c-3 3-4.7 7.1-4.7 11.3V176c0 8.8 7.2 16 16 16h41.4c4.2 0 8.3-1.7 11.3-4.7z"/></svg><h2><span id="t23" class="t " style="left:62px;top:38px;font-size:28.75px;line-height:38px;font-weight:700;color:#e1e2e4;letter-spacing:-1.200px;">System</span></h2><svg class="i" style="left:1045.0px;top:43.25px;" width="34.5" height="27.0" viewBox="18.0 -46.4 604.8 604.8" fill="#dcdde0" stroke="#dcdde0" stroke-width="19.7" stroke-linejoin="round" preserveAspectRatio="none"><path d="M415.9 210.5c12.2-3.3 25 2.5 30.5 13.8l18.6 37.6c10.3 1.4 20.4 4.2 29.9 8.1l35-23.3c10.5-7 24.4-5.6 33.3 3.3l19.2 19.2c8.9 8.9 10.3 22.9 3.3 33.3l-23.3 34.9c1.9 4.7 3.6 9.6 5 14.7s2.3 10.1 3 15.2l37.7 18.6c11.3 5.6 17.1 18.4 13.8 30.5l-7 26.2c-3.3 12.1-14.6 20.3-27.2 19.5l-42-2.7c-6.3 8.1-13.6 15.6-21.9 22l2.7 41.9c.8 12.6-7.4 24-19.5 27.2l-26.2 7c-12.2 3.3-24.9-2.5-30.5-13.8l-18.6-37.6c-10.3-1.4-20.4-4.2-29.9-8.1l-35 23.3c-10.5 7-24.4 5.6-33.3-3.3l-19.2-19.2c-8.9-8.9-10.3-22.8-3.3-33.3l23.3-35c-1.9-4.7-3.6-9.6-5-14.7s-2.3-10.2-3-15.2L288.6 382c-11.3-5.6-17-18.4-13.8-30.5l7-26.2c3.3-12.1 14.6-20.3 27.2-19.5l41.9 2.7c6.3-8.1 13.6-15.6 21.9-22l-2.7-41.8c-.8-12.6 7.4-24 19.5-27.2l26.2-7zM448.4 340a44 44 0 1 0 .1 88 44 44 0 1 0-.1-88M224.9-45.5l26.2 7c12.1 3.3 20.3 14.7 19.5 27.2l-2.7 41.8c8.3 6.4 15.6 13.8 21.9 22l42-2.7c12.5-.8 23.9 7.4 27.2 19.5l7 26.2c3.2 12.1-2.5 24.9-13.8 30.5l-37.7 18.6c-.7 5.1-1.7 10.2-3 15.2s-3.1 10-5 14.7l23.3 35c7 10.5 5.6 24.4-3.3 33.3L307.3 262c-8.9 8.9-22.8 10.3-33.3 3.3L239 242c-9.5 3.9-19.6 6.7-29.9 8.1l-18.6 37.6c-5.6 11.3-18.4 17-30.5 13.8l-26.2-7c-12.2-3.3-20.3-14.7-19.5-27.2l2.7-41.9c-8.3-6.4-15.6-13.8-21.9-22l-42 2.7c-12.5.8-23.9-7.4-27.2-19.5l-7-26.2c-3.2-12.1 2.5-24.9 13.8-30.5l37.7-18.6c.7-5.1 1.7-10.1 3-15.2 1.4-5.1 3-10 5-14.7L55.1 46.5c-7-10.5-5.6-24.4 3.3-33.3L77.6-6c8.9-8.9 22.8-10.3 33.3-3.3l35 23.3c9.5-3.9 19.6-6.7 29.9-8.1l18.6-37.6c5.6-11.3 18.3-17 30.5-13.8M192.4 84a44 44 0 1 0 0 88 44 44 0 1 0 0-88"/></svg><div style="position:absolute;left:28px;top:108px;width:512px;height:169px;background:#262a33;border-radius:6px;"></div><svg class="i" style="left:62.0px;top:160.0px;" width="49.0" height="56.0" viewBox="0.0 -32.0 384.0 544.0" fill="#eef2f7" preserveAspectRatio="none"><path d="M128 96c0-35.3 28.7-64 64-64 31.7 0 58 23 63.1 53.3 2.9 17.4 19.4 29.2 36.9 26.3s29.2-19.4 26.3-36.9C308.1 14.1 255.5-32 192-32 121.3-32 64 25.3 64 96v64c-35.3 0-64 28.7-64 64v224c0 35.3 28.7 64 64 64h256c35.3 0 64-28.7 64-64V224c0-35.3-28.7-64-64-64H128z"/></svg><span id="t24" class="t " style="left:56px;top:225px;font-size:25px;line-height:32px;font-weight:700;color:#eef2f7;letter-spacing:-1.077px;">Global Checkin</span><div style="position:absolute;left:79.5px;top:195px;width:14px;height:7px;background:#262a33;border-radius:3.5px;"></div><div style="position:absolute;left:569px;top:108px;width:512px;height:169px;background:#262a33;border-radius:6px;"></div><svg class="i" style="left:602.0px;top:163.0px;" width="71.0" height="50.0" viewBox="0.0 32.0 576.0 448.0" fill="#eef2f7" preserveAspectRatio="none"><path d="M0 336c0 79.5 64.5 144 144 144h304c70.7 0 128-57.3 128-128 0-51.6-30.5-96.1-74.5-116.3 6.7-13.1 10.5-28 10.5-43.7 0-53-43-96-96-96-17.7 0-34.2 4.8-48.4 13.1C343.5 63.3 295.4 32 240 32 160.5 32 96 96.5 96 176c0 8 .7 15.9 1.9 23.5C41 218.7 0 272.6 0 336"/></svg><span id="t25" class="t " style="left:597px;top:225px;font-size:25px;line-height:32px;font-weight:700;color:#eef2f7;letter-spacing:-1.250px;">Cache</span><div style="position:absolute;left:28px;top:305.4px;width:512px;height:169.6px;background:#262a33;border-radius:6px;"></div><svg class="i" style="left:63.0px;top:357.0px;" width="54.0" height="56.0" viewBox="1.5 -16.0 509.6 544.0" fill="#eef2f7" preserveAspectRatio="none"><path d="M195.1 9.5c3-14.8 16.1-25.5 31.3-25.5h59.8c15.2 0 28.3 10.7 31.3 25.5l14.5 70c14.1 6 27.3 13.7 39.3 22.8l67.8-22.5c14.4-4.8 30.2 1.2 37.8 14.4l29.9 51.8c7.6 13.2 4.9 29.8-6.5 39.9L447 233.3c.9 7.4 1.3 15 1.3 22.7s-.5 15.3-1.3 22.7l53.4 47.5c11.4 10.1 14 26.8 6.5 39.9L477 417.9c-7.6 13.1-23.4 19.2-37.8 14.4l-67.8-22.5c-12.1 9.1-25.3 16.7-39.3 22.8l-14.4 69.9c-3.1 14.9-16.2 25.5-31.3 25.5h-59.8c-15.2 0-28.3-10.7-31.3-25.5l-14.4-69.9c-14.1-6-27.2-13.7-39.3-22.8l-68.1 22.5c-14.4 4.8-30.2-1.2-37.8-14.4L5.8 366.1c-7.6-13.2-4.9-29.8 6.5-39.9l53.4-47.5c-.9-7.4-1.3-15-1.3-22.7s.5-15.3 1.3-22.7l-53.4-47.5C.9 175.7-1.7 159 5.8 145.9l29.9-51.8c7.6-13.2 23.4-19.2 37.8-14.4l67.8 22.5c12.1-9.1 25.3-16.7 39.3-22.8zM256.3 336a80 80 0 1 0-.6-160 80 80 0 1 0 .6 160"/></svg><span id="t26" class="t " style="left:56px;top:423px;font-size:25px;line-height:32px;font-weight:700;color:#eef2f7;letter-spacing:-0.947px;">Global Configuration</span></section>
<section style="position:absolute;left:1712px;top:706px;width:1110px;height:700px;background:#0e141c;border:1px solid #242933;border-radius:8px;"><svg class="i" style="left:29.0px;top:45.5px;" width="26.0" height="24.5" viewBox="-0.0 0.0 512.1 512.0" fill="#e1e2e4" preserveAspectRatio="none"><path d="M65.9 228.5C79.2 135.5 159.3 64 256 64c53 0 101 21.5 135.8 56.2l.6.6 7.6 7.2h-47.9c-17.7 0-32 14.3-32 32s14.3 32 32 32h128c17.7 0 32-14.3 32-32V32c0-17.7-14.3-32-32-32s-32 14.3-32 32v53.4l-11.3-10.7C390.5 28.6 326.5 0 256 0 127 0 20.3 95.4 2.6 219.5c-2.5 17.5 9.6 33.7 27.1 36.2s33.7-9.7 36.2-27.1zm443.5 64c2.5-17.5-9.7-33.7-27.1-36.2s-33.7 9.7-36.2 27.1c-13.3 93-93.4 164.5-190.1 164.5-53 0-101-21.5-135.8-56.2l-.6-.6-7.6-7.2h47.9c17.7 0 32-14.3 32-32s-14.3-32-32-32L32 320c-8.5 0-16.7 3.4-22.7 9.5S-.1 343.7 0 352.3l1 127c.1 17.7 14.6 31.9 32.3 31.7s31.9-14.6 31.7-32.3l-.4-51.5 10.7 10.1C121.6 483.4 185.5 512 256 512c129 0 235.7-95.4 253.4-219.5"/></svg><h2><span id="t27" class="t " style="left:62px;top:39px;font-size:28.75px;line-height:38px;font-weight:700;color:#e1e2e4;letter-spacing:-0.750px;">Notifications</span></h2><svg class="i" style="left:1045.0px;top:43.25px;" width="34.5" height="27.0" viewBox="18.0 -46.4 604.8 604.8" fill="#dcdde0" stroke="#dcdde0" stroke-width="19.7" stroke-linejoin="round" preserveAspectRatio="none"><path d="M415.9 210.5c12.2-3.3 25 2.5 30.5 13.8l18.6 37.6c10.3 1.4 20.4 4.2 29.9 8.1l35-23.3c10.5-7 24.4-5.6 33.3 3.3l19.2 19.2c8.9 8.9 10.3 22.9 3.3 33.3l-23.3 34.9c1.9 4.7 3.6 9.6 5 14.7s2.3 10.1 3 15.2l37.7 18.6c11.3 5.6 17.1 18.4 13.8 30.5l-7 26.2c-3.3 12.1-14.6 20.3-27.2 19.5l-42-2.7c-6.3 8.1-13.6 15.6-21.9 22l2.7 41.9c.8 12.6-7.4 24-19.5 27.2l-26.2 7c-12.2 3.3-24.9-2.5-30.5-13.8l-18.6-37.6c-10.3-1.4-20.4-4.2-29.9-8.1l-35 23.3c-10.5 7-24.4 5.6-33.3-3.3l-19.2-19.2c-8.9-8.9-10.3-22.8-3.3-33.3l23.3-35c-1.9-4.7-3.6-9.6-5-14.7s-2.3-10.2-3-15.2L288.6 382c-11.3-5.6-17-18.4-13.8-30.5l7-26.2c3.3-12.1 14.6-20.3 27.2-19.5l41.9 2.7c6.3-8.1 13.6-15.6 21.9-22l-2.7-41.8c-.8-12.6 7.4-24 19.5-27.2l26.2-7zM448.4 340a44 44 0 1 0 .1 88 44 44 0 1 0-.1-88M224.9-45.5l26.2 7c12.1 3.3 20.3 14.7 19.5 27.2l-2.7 41.8c8.3 6.4 15.6 13.8 21.9 22l42-2.7c12.5-.8 23.9 7.4 27.2 19.5l7 26.2c3.2 12.1-2.5 24.9-13.8 30.5l-37.7 18.6c-.7 5.1-1.7 10.2-3 15.2s-3.1 10-5 14.7l23.3 35c7 10.5 5.6 24.4-3.3 33.3L307.3 262c-8.9 8.9-22.8 10.3-33.3 3.3L239 242c-9.5 3.9-19.6 6.7-29.9 8.1l-18.6 37.6c-5.6 11.3-18.4 17-30.5 13.8l-26.2-7c-12.2-3.3-20.3-14.7-19.5-27.2l2.7-41.9c-8.3-6.4-15.6-13.8-21.9-22l-42 2.7c-12.5.8-23.9-7.4-27.2-19.5l-7-26.2c-3.2-12.1 2.5-24.9 13.8-30.5l37.7-18.6c.7-5.1 1.7-10.1 3-15.2 1.4-5.1 3-10 5-14.7L55.1 46.5c-7-10.5-5.6-24.4 3.3-33.3L77.6-6c8.9-8.9 22.8-10.3 33.3-3.3l35 23.3c9.5-3.9 19.6-6.7 29.9-8.1l18.6-37.6c5.6-11.3 18.3-17 30.5-13.8M192.4 84a44 44 0 1 0 0 88 44 44 0 1 0 0-88"/></svg><div style="position:absolute;left:28px;top:108px;width:512px;height:169.6px;background:#f1ae50;border-radius:6px;"></div><svg class="i" style="left:65.0px;top:173.0px;" width="49.5" height="49.5" viewBox="0.0 0.0 512.0 512.0" fill="#000" preserveAspectRatio="none"><path d="M481.7 240.1c-17.6-1.2-32.9 12-34.2 29.7-3.3 47-23.6 89.4-54.8 121L361 359c-6.9-6.9-17.2-8.9-26.2-5.2S320 366.3 320 376v112c0 13.3 10.7 24 24 24h112c9.7 0 18.5-5.8 22.2-14.8s1.7-19.3-5.2-26.2l-35-35c41.7-42.2 68.9-98.8 73.4-161.8 1.2-17.6-12-32.9-29.7-34.2zM39 41l35 35C32.3 118.2 5.1 174.8.6 237.8c-1.2 17.6 12 32.9 29.7 34.2s32.9-12 34.2-29.7c3.3-47 23.6-89.4 54.8-121L151 153c6.9 6.9 17.2 8.9 26.2 5.2S192 145.7 192 136V24c0-13.3-10.7-24-24-24H56c-9.7 0-18.5 5.8-22.2 14.8S32.2 34.1 39 41m201-10.7c-1.2 17.6 12 32.9 29.7 34.2 47 3.3 89.4 23.6 121 54.8L359 151c-6.9 6.9-8.9 17.2-5.2 26.2S366.3 192 376 192h112c13.3 0 24-10.7 24-24V56c0-9.7-5.8-18.5-14.8-22.2S477.9 32.2 471 39l-35 35C393.8 32.3 337.2 5.1 274.2.6c-17.6-1.2-32.9 12-34.2 29.7M41 473l35-35c42.2 41.7 98.8 68.9 161.8 73.4 17.6 1.2 32.9-12 34.2-29.7s-12-32.9-29.7-34.2c-47-3.3-89.4-23.6-121-54.8L153 361c6.9-6.9 8.9-17.2 5.2-26.2S145.7 320 136 320H24c-13.3 0-24 10.7-24 24v112c0 9.7 5.8 18.5 14.8 22.2s19.3 1.6 26.2-5.2"/></svg><span id="t28" class="t " style="left:62px;top:231px;font-size:25px;line-height:32px;font-weight:700;color:#000;letter-spacing:-0.867px;">Automated Updates are disabled.</span><div style="position:absolute;left:569px;top:108px;width:512px;height:169.6px;background:#c52827;border-radius:6px;"></div><svg class="i" style="left:591px;top:153px;" width="80" height="76" viewBox="0 0 80 76" fill="#fff" preserveAspectRatio="none"><path d="M28.6 17.3H39.9V37.9H23.4V27.2H29.8V32.9H33.5V22.8H28.6Z" stroke="#fff" stroke-width="0.5" stroke-linejoin="round"/><path d="M34.3 12.7C35.5 10.6 38.5 9.6 42.5 9.6H48.6C53.6 9.6 55.9 16.5 56.7 28.5C57.2 38 55.6 43.8 53.4 46.6L40.6 51.2L39.9 44.7L47.9 43.2V14.9H36C34.8 14.9 34 13.9 34.3 12.7Z"/><circle cx="37" cy="45.8" r="3.6"/><path d="M33.9 46H40.3L39.8 63H34.6Z"/><rect x="27.7" y="62.4" width="20" height="2.8" rx="1.2"/><ellipse cx="37.2" cy="64.8" rx="3.2" ry="1.4"/></svg><span id="t29" class="t " style="left:601px;top:231px;font-size:25px;line-height:32px;font-weight:700;color:#fff;letter-spacing:-0.765px;">Backup out of date</span><div style="position:absolute;left:28px;top:305.79999999999995px;width:512px;height:169.6px;background:#3e874d;border-radius:6px;"></div><svg class="i" style="left:62.0px;top:370.0px;" width="49.0" height="49.5" viewBox="-0.0 31.9 448.0 448.1" fill="#fff" preserveAspectRatio="none"><path d="M.6 92.1C.6 58.8 27.4 32 60.4 32c30 0 54.5 21.9 59.2 50.2 32.6-7.6 67.1.6 96.5 30l-44.3 44.3c-20.5-20.5-42.6-16.3-55.4-3.5-14.3 14.3-14.3 37.9 0 52.2l99.5 99.5-44 44.3c-87.7-87.2-49.7-49.7-99.8-99.7-26.8-26.5-35-64.8-24.8-98.9C20.4 144.6.6 120.7.6 92.1m129.5 116.4 44.3 44.3c10-10 89.7-89.7 99.7-99.8 14.3-14.3 37.6-14.3 51.9 0 12.8 12.8 17 35-3.5 55.4l44 44.3c31.2-31.2 38.5-67.6 28.9-101.2 29.2-4.1 51.9-29.2 51.9-59.5 0-33.2-26.8-60.1-59.8-60.1-30.3 0-55.4 22.5-59.5 51.6-33.8-9.9-71.7-1.5-98.3 25.1-18.3 19.1-71.1 71.5-99.6 99.9m266.3 152.2c8.2-32.7-.9-68.5-26.3-93.9-11.8-12.2 5 4.7-99.5-99.7l-44.3 44.3 99.7 99.7c14.3 14.3 14.3 37.6 0 51.9-12.8 12.8-35 17-55.4-3.5l-44 44.3c27.6 30.2 68 38.8 102.7 28 5.5 27.4 29.7 48.1 58.9 48.1 33 0 59.8-26.8 59.8-60.1 0-30.2-22.5-55-51.6-59.1m-84.3-53.1-44-44.3c-87 86.4-50.4 50.4-99.7 99.8-14.3 14.3-37.6 14.3-51.9 0-13.1-13.4-16.9-35.3 3.2-55.4l-44-44.3c-30.2 30.2-38 65.2-29.5 98.3-26.7 6-46.2 29.9-46.2 58.2C0 453.2 26.8 480 59.8 480c28.6 0 52.5-19.8 58.6-46.7 32.7 8.2 68.5-.6 94.2-26 32.1-32 12.2-12.4 99.5-99.7"/></svg><span id="t30" class="t " style="left:62px;top:428px;font-size:25px;line-height:32px;font-weight:700;color:#fff;letter-spacing:-0.750px;">Joomla is up to date.</span><div style="position:absolute;left:569px;top:305.79999999999995px;width:512px;height:169.6px;background:#3e874d;border-radius:6px;"></div><svg class="i" style="left:605.0px;top:367.0px;" width="58.0" height="55.5" viewBox="12.9 -32.0 550.2 525.6" fill="#fff" preserveAspectRatio="none"><path d="M309.5-18.9c-4.1-8-12.4-13.1-21.4-13.1s-17.3 5.1-21.4 13.1l-73.6 144.2-159.9 25.4c-8.9 1.4-16.3 7.7-19.1 16.3s-.5 18 5.8 24.4l114.4 114.5-25.2 159.9c-1.4 8.9 2.3 17.9 9.6 23.2s16.9 6.1 25 2l144.4-73.4L432.4 491c8 4.1 17.7 3.3 25-2s11-14.2 9.6-23.2l-25.3-159.9 114.4-114.5c6.4-6.4 8.6-15.8 5.8-24.4s-10.1-14.9-19.1-16.3L383 125.3z"/></svg><span id="t31" class="t " style="left:601px;top:428px;font-size:25px;line-height:32px;font-weight:700;color:#fff;letter-spacing:-0.880px;">Extensions are up to date.</span><div style="position:absolute;left:28px;top:503.5999999999999px;width:512px;height:169.6px;background:#3e874d;border-radius:6px;"></div><svg class="i" style="left:62.0px;top:565.0px;" width="42.0" height="56.0" viewBox="0.0 0.0 384.0 512.0" fill="#fff" preserveAspectRatio="none"><path d="M0 64C0 28.700 28.700 0 64 0H224V128c0 17.700 14.300 32 32 32H384V448c0 35.300-28.700 64-64 64H64c-35.300 0-64-28.700-64-64V64zm384 64H256V0L384 128z"/></svg><span id="t32" class="t " style="left:62px;top:626px;font-size:25px;line-height:32px;font-weight:700;color:#fff;letter-spacing:-0.875px;">Overrides are up to date.</span><div style="position:absolute;left:569px;top:503.5999999999999px;width:512px;height:169.6px;background:#3e874d;border-radius:6px;"></div><svg class="i" style="left:602.0px;top:565.0px;" width="71.0" height="56.0" viewBox="0.0 0.0 640.0 512.0" fill="#fff" preserveAspectRatio="none"><path d="M144 0a80 80 0 1 1 0 160A80 80 0 1 1 144 0zM512 0a80 80 0 1 1 0 160A80 80 0 1 1 512 0zM0 298.700C0 239.800 47.800 192 106.700 192h42.700c15.900 0 31 3.500 44.600 9.700c-1.300 7.200-1.900 14.700-1.900 22.300c0 38.200 16.800 72.500 43.300 96c-.2 0-.4 0-.7 0H21.300C9.600 320 0 310.400 0 298.700zM405.300 320c-.2 0-.4 0-.7 0c26.600-23.500 43.300-57.800 43.300-96c0-7.600-.7-15-1.900-22.300c13.600-6.300 28.700-9.700 44.600-9.700h42.700C592.200 192 640 239.800 640 298.700c0 11.800-9.600 21.300-21.300 21.300H405.300zM224 224a96 96 0 1 1 192 0 96 96 0 1 1 -192 0zM128 485.300C128 411.700 187.700 352 261.300 352H378.700C452.300 352 512 411.700 512 485.300c0 14.700-11.900 26.700-26.700 26.700H154.700c-14.700 0-26.700-11.900-26.700-26.700z"/></svg><span id="t33" class="t " style="left:601px;top:626px;font-size:25px;line-height:32px;font-weight:700;color:#fff;letter-spacing:-0.846px;">No urgent privacy requests.</span></section>
<section style="position:absolute;left:1712px;top:1441px;width:1110px;height:198px;background:#0e141c;border:1px solid #242933;border-radius:8px;"></section>
<section style="position:absolute;left:565px;top:904px;width:1109px;height:698px;background:#0e141c;border:1px solid #242933;border-radius:8px;"><h2><span id="t34" class="t " style="left:28px;top:38px;font-size:28.75px;line-height:38px;font-weight:700;color:#e1e2e4;letter-spacing:-1.200px;">Sample Data</span></h2><svg class="i" style="left:1045.25px;top:43.25px;" width="34.25" height="27.0" viewBox="18.0 -46.4 604.8 604.8" fill="#dcdde0" stroke="#dcdde0" stroke-width="19.7" stroke-linejoin="round" preserveAspectRatio="none"><path d="M415.9 210.5c12.2-3.3 25 2.5 30.5 13.8l18.6 37.6c10.3 1.4 20.4 4.2 29.9 8.1l35-23.3c10.5-7 24.4-5.6 33.3 3.3l19.2 19.2c8.9 8.9 10.3 22.9 3.3 33.3l-23.3 34.9c1.9 4.7 3.6 9.6 5 14.7s2.3 10.1 3 15.2l37.7 18.6c11.3 5.6 17.1 18.4 13.8 30.5l-7 26.2c-3.3 12.1-14.6 20.3-27.2 19.5l-42-2.7c-6.3 8.1-13.6 15.6-21.9 22l2.7 41.9c.8 12.6-7.4 24-19.5 27.2l-26.2 7c-12.2 3.3-24.9-2.5-30.5-13.8l-18.6-37.6c-10.3-1.4-20.4-4.2-29.9-8.1l-35 23.3c-10.5 7-24.4 5.6-33.3-3.3l-19.2-19.2c-8.9-8.9-10.3-22.8-3.3-33.3l23.3-35c-1.9-4.7-3.6-9.6-5-14.7s-2.3-10.2-3-15.2L288.6 382c-11.3-5.6-17-18.4-13.8-30.5l7-26.2c3.3-12.1 14.6-20.3 27.2-19.5l41.9 2.7c6.3-8.1 13.6-15.6 21.9-22l-2.7-41.8c-.8-12.6 7.4-24 19.5-27.2l26.2-7zM448.4 340a44 44 0 1 0 .1 88 44 44 0 1 0-.1-88M224.9-45.5l26.2 7c12.1 3.3 20.3 14.7 19.5 27.2l-2.7 41.8c8.3 6.4 15.6 13.8 21.9 22l42-2.7c12.5-.8 23.9 7.4 27.2 19.5l7 26.2c3.2 12.1-2.5 24.9-13.8 30.5l-37.7 18.6c-.7 5.1-1.7 10.2-3 15.2s-3.1 10-5 14.7l23.3 35c7 10.5 5.6 24.4-3.3 33.3L307.3 262c-8.9 8.9-22.8 10.3-33.3 3.3L239 242c-9.5 3.9-19.6 6.7-29.9 8.1l-18.6 37.6c-5.6 11.3-18.4 17-30.5 13.8l-26.2-7c-12.2-3.3-20.3-14.7-19.5-27.2l2.7-41.9c-8.3-6.4-15.6-13.8-21.9-22l-42 2.7c-12.5.8-23.9-7.4-27.2-19.5l-7-26.2c-3.2-12.1 2.5-24.9 13.8-30.5l37.7-18.6c.7-5.1 1.7-10.1 3-15.2 1.4-5.1 3-10 5-14.7L55.1 46.5c-7-10.5-5.6-24.4 3.3-33.3L77.6-6c8.9-8.9 22.8-10.3 33.3-3.3l35 23.3c9.5-3.9 19.6-6.7 29.9-8.1l18.6-37.6c5.6-11.3 18.3-17 30.5-13.8M192.4 84a44 44 0 1 0 0 88 44 44 0 1 0 0-88"/></svg><div style="position:absolute;left:0px;top:108px;width:1109px;height:1px;background:#242933;"></div><svg class="i" style="left:28.5px;top:149.0px;" width="35.5" height="25.5" viewBox="0.1 32.0 575.9 448.0" fill="#e1e2e4" preserveAspectRatio="none"><path d="M288 96c-90.9 0-173.2 36-233.7 94.6-12.7 12.3-33 12-45.2-.7s-12-33 .7-45.2C81.7 74.9 179.9 32 288 32s206.3 42.9 278.3 112.7c12.7 12.3 13 32.6.7 45.2s-32.6 13-45.2.7C461.2 132 378.9 96 288 96m-48 336a48 48 0 1 1 96 0 48 48 0 1 1-96 0m-72-105.8c-11.7 13.3-31.9 14.5-45.2 2.8s-14.5-31.9-2.8-45.2c41-46.4 101.1-75.8 168-75.8s127 29.4 168 75.8c11.7 13.3 10.4 33.5-2.8 45.2s-33.5 10.4-45.2-2.8c-29.4-33.3-72.2-54.2-120-54.2s-90.6 20.9-120 54.2"/></svg><h3><span id="t35" class="t " style="left:78px;top:143px;font-size:28.75px;line-height:38px;font-weight:700;color:#e1e2e4;letter-spacing:-1.200px;">Blog Sample Data</span></h3><div style="position:absolute;left:962px;top:137px;width:117px;height:48px;background:#007fb3;border:1px solid #0a9ad4;border-radius:6px;"></div><svg class="i" style="left:977.0px;top:150.0px;" width="23.0" height="23.0" viewBox="0.0 0.0 448.0 480.0" fill="#fff" preserveAspectRatio="none"><path d="M256 109.3V320c0 17.7-14.3 32-32 32s-32-14.3-32-32V109.3l-41.4 41.4c-12.5 12.5-32.8 12.5-45.3 0s-12.5-32.8 0-45.3l96-96c12.5-12.5 32.8-12.5 45.3 0l96 96c12.5 12.5 12.5 32.8 0 45.3s-32.8 12.5-45.3 0zM224 400c44.2 0 80-35.8 80-80h80c35.3 0 64 28.7 64 64v32c0 35.3-28.7 64-64 64H64c-35.3 0-64-28.7-64-64v-32c0-35.3 28.7-64 64-64h80c0 44.2 35.8 80 80 80m144 24a24 24 0 1 0 0-48 24 24 0 1 0 0 48"/></svg><span id="t36" class="t " style="left:1005px;top:146px;font-size:24px;line-height:31px;-webkit-text-stroke:0.3px;color:#fff;letter-spacing:-0.167px;">Install</span><div style="position:absolute;left:42px;top:194px;width:7px;height:68px;background:#262a33;"></div><span id="t37" class="t " style="left:77px;top:195px;font-size:24px;line-height:31px;-webkit-text-stroke:0.3px;color:#e1e2e4;letter-spacing:-0.549px;">Sample data which will set up a blog site with articles, tags, custom fields and a workflow.</span><span id="t38" class="t " style="left:76px;top:229px;font-size:24px;line-height:31px;-webkit-text-stroke:0.3px;color:#e1e2e4;letter-spacing:-0.566px;">If the site is multilingual, the data will be tagged to the active backend language.</span><div style="position:absolute;left:0px;top:290px;width:1109px;height:1px;background:#242933;"></div><svg class="i" style="left:28.5px;top:331.0px;" width="35.5" height="25.5" viewBox="0.1 32.0 575.9 448.0" fill="#e1e2e4" preserveAspectRatio="none"><path d="M288 96c-90.9 0-173.2 36-233.7 94.6-12.7 12.3-33 12-45.2-.7s-12-33 .7-45.2C81.7 74.9 179.9 32 288 32s206.3 42.9 278.3 112.7c12.7 12.3 13 32.6.7 45.2s-32.6 13-45.2.7C461.2 132 378.9 96 288 96m-48 336a48 48 0 1 1 96 0 48 48 0 1 1-96 0m-72-105.8c-11.7 13.3-31.9 14.5-45.2 2.8s-14.5-31.9-2.8-45.2c41-46.4 101.1-75.8 168-75.8s127 29.4 168 75.8c11.7 13.3 10.4 33.5-2.8 45.2s-33.5 10.4-45.2-2.8c-29.4-33.3-72.2-54.2-120-54.2s-90.6 20.9-120 54.2"/></svg><h3><span id="t39" class="t " style="left:78px;top:325px;font-size:28.75px;line-height:38px;font-weight:700;color:#e1e2e4;letter-spacing:-0.957px;">Multilingual Sample Data</span></h3><div style="position:absolute;left:962px;top:319px;width:117px;height:48px;background:#007fb3;border:1px solid #0a9ad4;border-radius:6px;"></div><svg class="i" style="left:977.0px;top:332.0px;" width="23.0" height="23.0" viewBox="0.0 0.0 448.0 480.0" fill="#fff" preserveAspectRatio="none"><path d="M256 109.3V320c0 17.7-14.3 32-32 32s-32-14.3-32-32V109.3l-41.4 41.4c-12.5 12.5-32.8 12.5-45.3 0s-12.5-32.8 0-45.3l96-96c12.5-12.5 32.8-12.5 45.3 0l96 96c12.5 12.5 12.5 32.8 0 45.3s-32.8 12.5-45.3 0zM224 400c44.2 0 80-35.8 80-80h80c35.3 0 64 28.7 64 64v32c0 35.3-28.7 64-64 64H64c-35.3 0-64-28.7-64-64v-32c0-35.3 28.7-64 64-64h80c0 44.2 35.8 80 80 80m144 24a24 24 0 1 0 0-48 24 24 0 1 0 0 48"/></svg><span id="t40" class="t " style="left:1005px;top:328px;font-size:24px;line-height:31px;-webkit-text-stroke:0.3px;color:#fff;letter-spacing:-0.167px;">Install</span><div style="position:absolute;left:42px;top:376px;width:7px;height:102px;background:#262a33;"></div><span id="t41" class="t " style="left:77px;top:377px;font-size:24px;line-height:31px;-webkit-text-stroke:0.3px;color:#e1e2e4;letter-spacing:-0.510px;">Sample data which will set up a multilingual site.</span><span id="t42" class="t " style="left:76px;top:411px;font-size:24px;line-height:31px;-webkit-text-stroke:0.3px;color:#e1e2e4;letter-spacing:-0.716px;">Before launching, make sure you have at least 2 languages installed with their Content Languages</span><span id="t43" class="t " style="left:77px;top:445px;font-size:24px;line-height:31px;-webkit-text-stroke:0.3px;color:#e1e2e4;letter-spacing:-0.643px;">and that no sample data has been installed.</span><div style="position:absolute;left:0px;top:506px;width:1109px;height:1px;background:#242933;"></div><div style="position:absolute;left:941px;top:536px;width:138px;height:48px;background:#007fb3;border:1px solid #0a9ad4;border-radius:6px;"></div><svg class="i" style="left:956.0px;top:549.0px;" width="24.0" height="23.0" viewBox="-0.0 31.9 512.0 424.1" fill="#fff" preserveAspectRatio="none"><path d="M133.8 36.3c10.9 7.6 13.5 22.6 5.9 33.4l-56 80c-4.1 5.8-10.5 9.5-17.6 10.1S52 158 47 153L7 113c-9.3-9.4-9.3-24.6 0-34s24.6-9.3 34 0l19.8 19.8 39.6-56.6c7.6-10.9 22.6-13.5 33.4-5.9m0 160c10.9 7.6 13.5 22.6 5.9 33.4l-56 80c-4.1 5.8-10.5 9.5-17.6 10.1S52 318 47 313L7 273c-9.4-9.4-9.4-24.6 0-33.9s24.6-9.4 33.9 0l19.8 19.8 39.6-56.6c7.6-10.9 22.6-13.5 33.4-5.9zM224 96c0-17.7 14.3-32 32-32h224c17.7 0 32 14.3 32 32s-14.3 32-32 32H256c-17.7 0-32-14.3-32-32m0 160c0-17.7 14.3-32 32-32h224c17.7 0 32 14.3 32 32s-14.3 32-32 32H256c-17.7 0-32-14.3-32-32m-64 160c0-17.7 14.3-32 32-32h288c17.7 0 32 14.3 32 32s-14.3 32-32 32H192c-17.7 0-32-14.3-32-32m-96-40a40 40 0 1 1 0 80 40 40 0 1 1 0-80"/></svg><span id="t44" class="t " style="left:984px;top:545px;font-size:24px;line-height:31px;-webkit-text-stroke:0.3px;color:#fff;letter-spacing:-0.800px;">Manage</span></section>
<div style="position:absolute;left:2878px;top:0px;width:1px;height:1471px;background:#020308;"></div>
<div style="position:absolute;left:2879px;top:0px;width:1px;height:1471px;background:#b9babd;"></div>
</div>
</body></html>
